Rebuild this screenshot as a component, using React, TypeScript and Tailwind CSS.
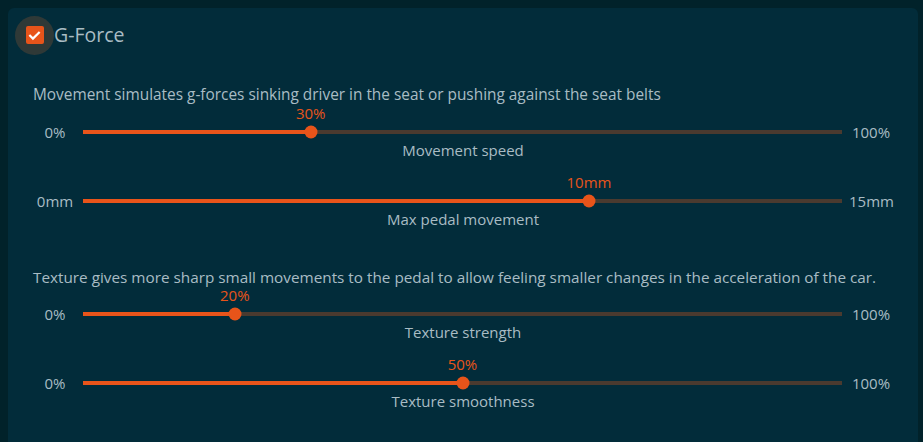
import React from 'react';

interface SliderProps {
  min: string;
  max: string;
  value: number; // 0..1
  valueLabel: string;
  caption: string;
}

function Slider({ min, max, value, valueLabel, caption }: SliderProps) {
  const pct = `${value * 100}%`;
  return (
    <div className="flex flex-col">
      <div className="flex items-center h-[18px] mt-[18px]">
        <div className="w-[44px] shrink-0 text-center text-[15px] text-[#a9bcc4]">{min}</div>
        <div className="relative flex-1 ml-[6px] mr-[7px] h-[4px] bg-[#4a3a2f]">
          <div className="absolute left-0 top-0 h-full bg-[#e8541a]" style={{ width: pct }} />
          <div
            className="absolute top-1/2 w-[13px] h-[13px] -translate-x-1/2 -translate-y-1/2 rounded-full bg-[#e8541a]"
            style={{ left: pct }}
          />
          <div
            className="absolute bottom-[12px] -translate-x-1/2 text-[15px] leading-[18px] text-[#e8541a] whitespace-nowrap"
            style={{ left: pct }}
          >
            {valueLabel}
          </div>
        </div>
        <div className="w-[44px] shrink-0 text-center text-[15px] text-[#a9bcc4]">{max}</div>
      </div>
      <div className="text-center text-[15px] leading-[18px] text-[#a9bcc4]">{caption}</div>
    </div>
  );
}

export default function App() {
  return (
    <div
      className="w-[923px] h-[442px] overflow-hidden bg-[#01222a] pt-[8px] pl-[8px] pr-[5px]"
      style={{ fontFamily: '"Open Sans", "Liberation Sans", sans-serif' }}
    >
      <div className="h-[450px] rounded-[6px] bg-[#022c3a] pt-[8px] pl-[7px] pr-[25px]">
        {/* Header */}
        <div className="flex items-center h-[38px]">
          <div className="w-[39px] h-[39px] rounded-full bg-[#2f3937] flex items-center justify-center">
            <div className="w-[18px] h-[18px] rounded-[2px] bg-[#e8541a] flex items-center justify-center">
              <svg viewBox="0 0 24 24" className="w-[15px] h-[15px]" fill="none" stroke="white" strokeWidth={3.5} strokeLinecap="square">
                <path d="M5 12.5l4.5 4.5L19 7.5" />
              </svg>
            </div>
          </div>
          <span className="text-[19.5px] text-[#a9bcc4] leading-none">G-Force</span>
        </div>

        <div className="pl-[18px]">
          <p className="mt-[31px] text-[15.4px] leading-[20px] text-[#a9bcc4]">
            Movement simulates g-forces sinking driver in the seat or pushing against the seat belts
          </p>
          <Slider min="0%" max="100%" value={0.3} valueLabel="30%" caption="Movement speed" />
          <div className="mt-[15px]">
            <Slider min="0mm" max="15mm" value={2 / 3} valueLabel="10mm" caption="Max pedal movement" />
          </div>

          <p className="mt-[39px] text-[15.3px] leading-[20px] text-[#a9bcc4]">
            Texture gives more sharp small movements to the pedal to allow feeling smaller changes in the acceleration of the car.
          </p>
          <Slider min="0%" max="100%" value={0.2} valueLabel="20%" caption="Texture strength" />
          <div className="mt-[15px]">
            <Slider min="0%" max="100%" value={0.5} valueLabel="50%" caption="Texture smoothness" />
          </div>
        </div>
      </div>
    </div>
  );
}
